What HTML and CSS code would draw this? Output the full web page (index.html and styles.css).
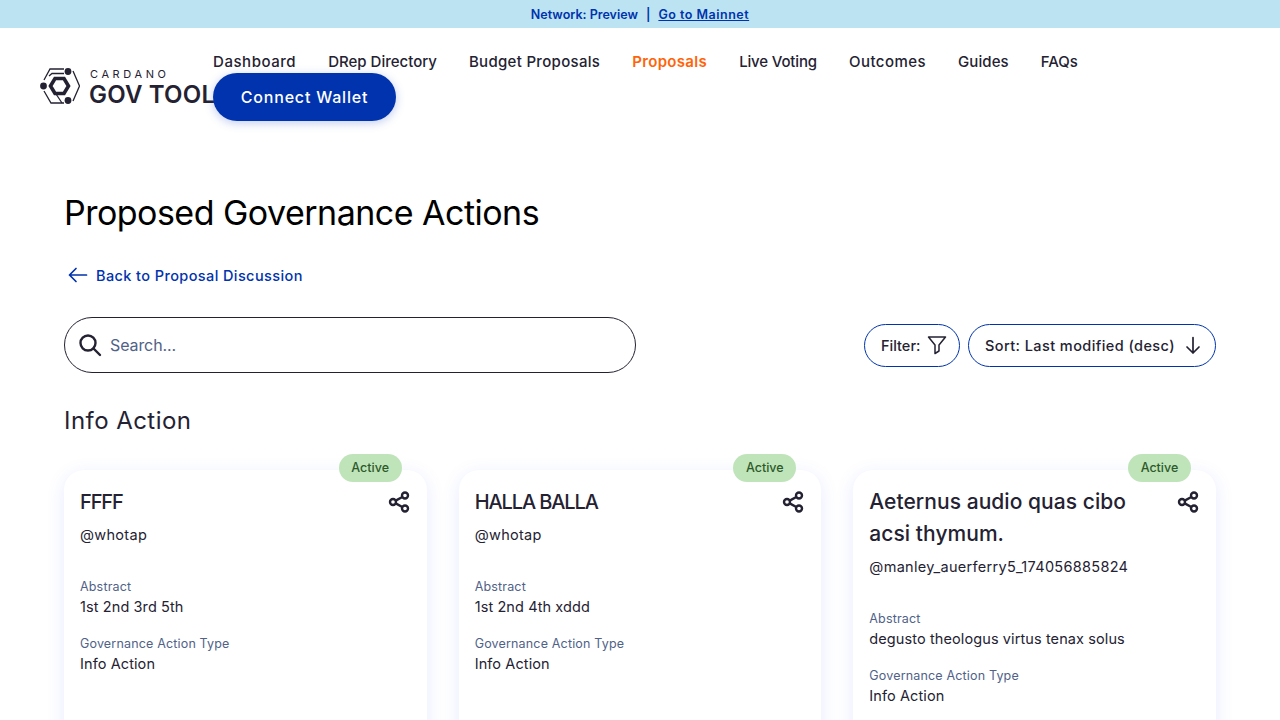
FILE: index.html
```html
<!DOCTYPE html>
<html lang="en">
<head>
<meta charset="utf-8">
<title>Proposed Governance Actions</title>
<link rel="stylesheet" href="styles.css">
</head>
<body>
<div class="banner"><span>Network: Preview</span><span class="sep">|</span><a class="banner-link" href="#">Go to Mainnet</a></div>
<header class="header">
  <a class="logo" href="#">
    <svg class="logo-mark" viewBox="0 0 40 36" width="40" height="36" fill="none" stroke="#242232" stroke-width="1.300">
      <path d="M4 12 10 1H24"/>
      <path d="M9 8 12 5.500H24"/>
      <path d="M33 3 39.500 18 33 33"/>
      <path d="M4 23 11 35H24"/>
      <path d="M16 26 22 35"/>
      <path d="M10.500 18 15 10.500H24L28.500 18 24 25.500H15Z" stroke-width="3.600"/>
      <circle cx="28" cy="3.500" r="3.400" fill="#242232" stroke="none"/>
      <circle cx="3.500" cy="18" r="3.400" fill="#242232" stroke="none"/>
      <circle cx="28" cy="32.500" r="3.400" fill="#242232" stroke="none"/>
    </svg>
    <span class="logo-text"><span class="logo-top">CARDANO</span><span class="logo-main">GOV TOOL</span></span>
  </a>
  <div class="nav-wrap">
    <nav class="nav">
      <a href="#">Dashboard</a>
      <a href="#">DRep Directory</a>
      <a href="#">Budget Proposals</a>
      <a href="#" class="current">Proposals</a>
      <a href="#">Live Voting</a>
      <a href="#">Outcomes</a>
      <a href="#">Guides</a>
      <a href="#">FAQs</a>
    </nav>
    <button class="connect">Connect Wallet</button>
  </div>
</header>
<main class="main">
  <h1 class="title">Proposed Governance Actions</h1>
  <a class="back" href="#">
    <svg width="20" height="20" viewBox="0 0 20 20" fill="none" stroke="#0033AD" stroke-width="1.700" stroke-linecap="round" stroke-linejoin="round"><path d="M18.500 10H1.500M8 3.500 1.500 10 8 16.500"/></svg>
    <span>Back to Proposal Discussion</span>
  </a>
  <div class="toolbar">
    <label class="search">
      <svg width="24" height="24" viewBox="0 0 24 24" fill="none" stroke="#242232" stroke-width="2.400" stroke-linecap="round"><circle cx="10" cy="10" r="7.500"/><path d="M15.500 15.500 22 22"/></svg>
      <span class="placeholder">Search...</span>
    </label>
    <div class="tools">
      <button class="tool filter">Filter:
        <svg width="20" height="20" viewBox="0 0 20 20" fill="none" stroke="#242232" stroke-width="1.500" stroke-linejoin="round"><path d="M1.500 2H18.500L12 10V16L8 18.500V10Z"/></svg>
      </button>
      <button class="tool sort">Sort: Last modified (desc)
        <svg width="20" height="20" viewBox="0 0 20 20" fill="none" stroke="#242232" stroke-width="1.700" stroke-linecap="round" stroke-linejoin="round"><path d="M10 2.500V18M4 12 10 18 16 12"/></svg>
      </button>
    </div>
  </div>
  <h2 class="section">Info Action</h2>
  <div class="cards">
    <article class="card">
      <span class="badge">Active</span>
      <div class="card-head">
        <h3 class="card-title caps">FFFF</h3>
        <svg class="share" width="24" height="24" viewBox="0 0 24 24" fill="none" stroke="#242232" stroke-width="2.400"><circle cx="18" cy="5.500" r="3"/><circle cx="6" cy="12" r="3"/><circle cx="18" cy="18.500" r="3"/><path d="M8.700 10.600 15.300 7M8.700 13.400 15.300 17"/></svg>
      </div>
      <p class="author">@whotap</p>
      <p class="label">Abstract</p>
      <p class="value">1st 2nd 3rd 5th</p>
      <p class="label second">Governance Action Type</p>
      <p class="value">Info Action</p>
    </article>
    <article class="card">
      <span class="badge">Active</span>
      <div class="card-head">
        <h3 class="card-title caps">HALLA BALLA</h3>
        <svg class="share" width="24" height="24" viewBox="0 0 24 24" fill="none" stroke="#242232" stroke-width="2.400"><circle cx="18" cy="5.500" r="3"/><circle cx="6" cy="12" r="3"/><circle cx="18" cy="18.500" r="3"/><path d="M8.700 10.600 15.300 7M8.700 13.400 15.300 17"/></svg>
      </div>
      <p class="author">@whotap</p>
      <p class="label">Abstract</p>
      <p class="value">1st 2nd 4th xddd</p>
      <p class="label second">Governance Action Type</p>
      <p class="value">Info Action</p>
    </article>
    <article class="card">
      <span class="badge">Active</span>
      <div class="card-head">
        <h3 class="card-title">Aeternus audio quas cibo acsi thymum.</h3>
        <svg class="share" width="24" height="24" viewBox="0 0 24 24" fill="none" stroke="#242232" stroke-width="2.400"><circle cx="18" cy="5.500" r="3"/><circle cx="6" cy="12" r="3"/><circle cx="18" cy="18.500" r="3"/><path d="M8.700 10.600 15.300 7M8.700 13.400 15.300 17"/></svg>
      </div>
      <p class="author">@manley_auerferry5_174056885824</p>
      <p class="label">Abstract</p>
      <p class="value">degusto theologus virtus tenax solus</p>
      <p class="label second">Governance Action Type</p>
      <p class="value">Info Action</p>
    </article>
  </div>
</main>
</body>
</html>
```

FILE: styles.css
```css
* { box-sizing: border-box; }
html, body { margin: 0; padding: 0; background: #fff; overflow: hidden; height: 720px; }
body { font-family: Inter, "Noto Sans", sans-serif; color: #242232; }
a { text-decoration: none; color: inherit; }
h1, h2, h3, p { margin: 0; font-weight: 400; }

.banner { height: 28px; background: #bbe3f2; color: #0033ad; display: flex; justify-content: center; align-items: center; font-size: 12.500px; font-weight: 600; }
.sep { margin: 0 8px; }
.banner-link { text-decoration: underline; letter-spacing: .5px; }

.header { display: flex; padding: 20px 40px 0; height: 129px; }
.logo { display: flex; align-items: center; gap: 9px; width: 173px; height: 74px; flex: none; }
.logo-mark { flex: none; margin-top: 1px; }
.logo-text { display: flex; flex-direction: column; margin-top: 5px; }
.logo-top { font-size: 11px; line-height: 12px; letter-spacing: 3.600px; font-weight: 400; padding-left: 1px; }
.logo-main { font-size: 24px; line-height: 24px; margin-top: 3px; font-weight: 600; white-space: nowrap; letter-spacing: 0.200px; }

.nav { display: flex; gap: 32px; font-size: 15px; line-height: 28px; font-weight: 500; }
.nav a { white-space: nowrap; }
.nav a:nth-child(1) { letter-spacing: .55px; }
.nav a:nth-child(3) { letter-spacing: .31px; }
.nav a:nth-child(4) { letter-spacing: .33px; }
.nav a:nth-child(5) { letter-spacing: -.15px; }
.nav a:nth-child(6) { letter-spacing: .45px; }
.nav a:nth-child(7) { letter-spacing: .1px; }
.nav .current { color: #ff640a; font-weight: 600; }
.nav-wrap { display: flex; flex-direction: column; align-items: flex-start; }
.connect { margin-top: -3px; width: 183px; height: 48px; border: 0; border-radius: 24px; background: #0033ad; color: #fff; font: 500 16px Inter, sans-serif; letter-spacing: .8px; box-shadow: 0 2px 10px rgba(51, 85, 200, .3); }

.main { padding: 0 64px; }
.title { font-size: 34px; line-height: 48px; margin-top: 32px; color: #000; letter-spacing: -.52px; }
.back { display: flex; align-items: center; gap: 8px; margin: 26px 0 0 4px; height: 24px; color: #0033ad; font-size: 14.500px; font-weight: 500; letter-spacing: .4px; }
.back svg { flex: none; }

.toolbar { display: flex; justify-content: space-between; align-items: center; margin-top: 30px; }
.search { display: flex; align-items: center; gap: 8px; width: 572px; height: 56px; border: 1px solid #242232; border-radius: 28px; padding-left: 13px; }
.placeholder { color: #506288; font-size: 16px; letter-spacing: -.1px; }
.tools { display: flex; gap: 8px; }
.tool { display: flex; align-items: center; justify-content: space-between; height: 43px; padding: 0 12px 0 16px; background: #fff; border: 1px solid #0033ad; border-radius: 22px; color: #242232; font: 500 14.500px Inter, sans-serif; }
.filter { width: 96px; }
.sort { width: 248px; letter-spacing: .42px; }

.section { font-size: 24px; line-height: 36px; margin-top: 30px; letter-spacing: .45px; }

.cards { display: grid; grid-template-columns: repeat(3, 1fr); gap: 32px; margin-top: 31px; }
.card { position: relative; background: #fff; border-radius: 20px; box-shadow: 0 4px 18px rgba(80, 100, 255, .13); padding: 16px; min-height: 400px; }
.badge { position: absolute; top: -16px; right: 25px; width: 63px; height: 28px; line-height: 28px; text-align: center; border-radius: 14px; background: #c0e4ba; color: #2d5a2a; font-size: 12.500px; font-weight: 500; }
.card-head { display: flex; justify-content: space-between; align-items: flex-start; gap: 16px; }
.card-title { font-size: 21px; line-height: 32px; font-weight: 500; letter-spacing: .05px; }
.card-title.caps { font-size: 20px; letter-spacing: -1.100px; }
.share { flex: none; margin-top: 4px; }
.author { font-size: 14.500px; line-height: 24px; margin-top: 5px; letter-spacing: .3px; }
.label { font-size: 12.500px; line-height: 18px; color: #506288; margin-top: 31px; letter-spacing: .17px; }
.label.second { margin-top: 17px; }
.value { font-size: 14.500px; line-height: 22px; letter-spacing: .1px; }
```
